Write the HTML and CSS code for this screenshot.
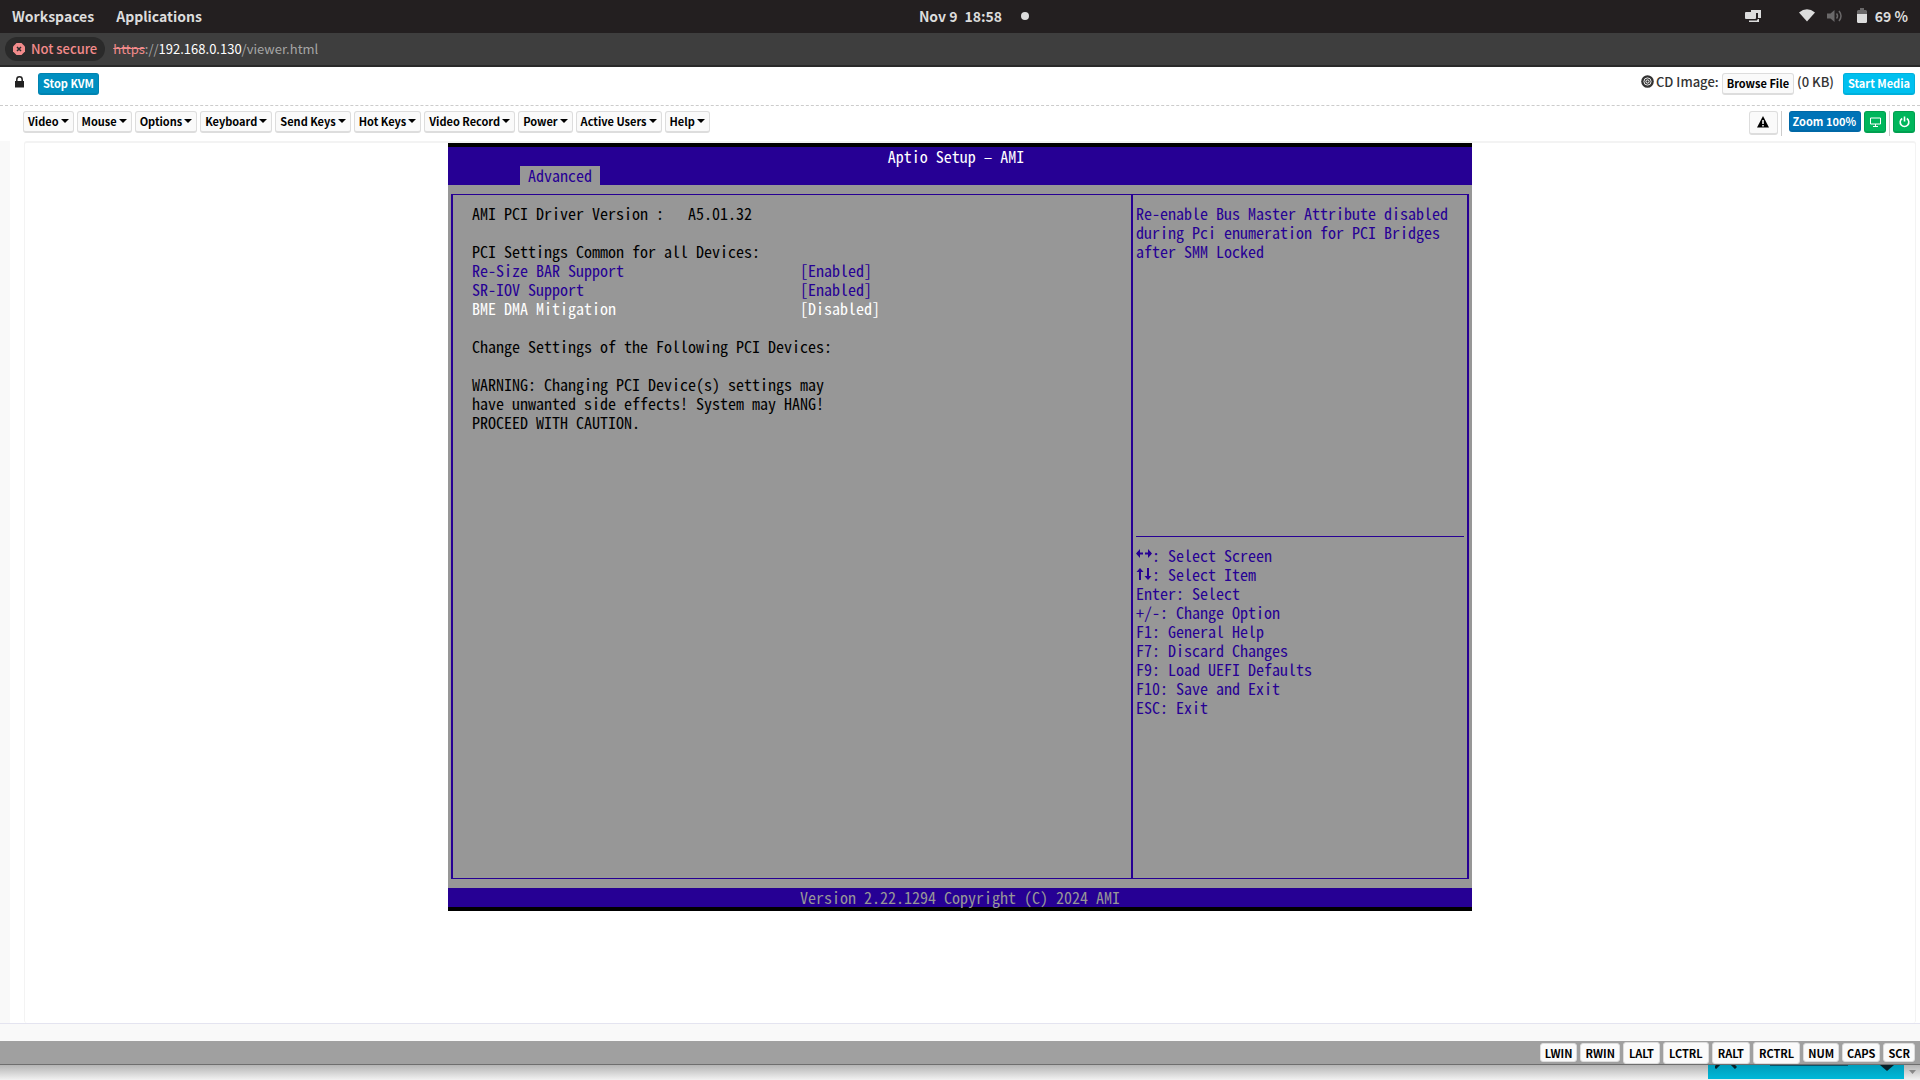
FILE: index.html
```html
<!DOCTYPE html>
<html lang="en">
<head>
<meta charset="utf-8">
<title>KVM Viewer</title>
<link rel="stylesheet" href="styles.css">
</head>
<body>
<header class="desktop-bar">
  <nav class="desktop-menu">
    <button class="desktop-item" type="button">Workspaces</button>
    <button class="desktop-item" type="button">Applications</button>
  </nav>
  <div class="clock"><span>Nov 9</span><span>18:58</span><span class="clock-dot"></span></div>
  <div class="tray">
    <svg class="tray-windows" width="16" height="14" viewBox="0 0 16 14"><path d="M6 1h10v8h-3V4H6zM4 11h8v-1h2v3H4z" fill="#dcdcdc"/><rect x="0" y="3" width="11" height="7" rx="1" fill="#dcdcdc"/><path d="M12 5v6H4" fill="none" stroke="#231f20"/></svg>
    <svg class="tray-wifi" width="16" height="13" viewBox="0 0 16 13"><path d="M0 3.5Q8-2.8 16 3.5L8 12.5z" fill="#dcdcdc"/></svg>
    <svg class="tray-sound" width="16" height="14" viewBox="0 0 16 14"><path d="M0 4.500h3.500L7.500 1v12L3.500 9.500H0z" fill="#6a6869"/><path d="M9.500 4.500q2 2.500 0 5M12 2q4 5 0 10" fill="none" stroke="#6a6869" stroke-width="1.500"/></svg>
    <svg class="tray-battery" width="10" height="15" viewBox="0 0 10 15"><path d="M3 0h4v2h2l1 1v11l-1 1H1l-1-1V3l1-1h2z" fill="#6a6869"/><path d="M0 6h10v8l-1 1H1l-1-1z" fill="#dcdcdc"/></svg>
    <span>69 %</span>
  </div>
</header>

<div class="address-bar">
  <button class="security-chip" type="button">
    <svg width="12" height="12" viewBox="0 0 12 12"><path d="M3.500 0h5L12 3.500v5L8.500 12h-5L0 8.500v-5z" fill="#f28b8b"/><path d="M4 4l4 4M8 4L4 8" stroke="#2a2a2a" stroke-width="1.500"/></svg>
    Not secure
  </button>
  <div class="url"><s>https</s>://<b>192.168.0.130</b>/viewer.html</div>
</div>

<main class="viewer">
  <div class="media-bar">
    <svg class="lock" width="9" height="12" viewBox="0 0 9 12"><path d="M0 5h9v6.500H0z" fill="#222"/><path d="M1.800 6V3.500a2.700 2.700 0 0 1 5.400 0V6" fill="none" stroke="#222" stroke-width="1.500"/></svg>
    <button class="btn btn-primary" type="button">Stop KVM</button>
    <div class="media">
      <svg width="13" height="13" viewBox="0 0 13 13"><circle cx="6.500" cy="6.500" r="6.300" fill="#333"/><circle cx="6.500" cy="6.500" r="3.600" fill="none" stroke="#fff" stroke-width=".9"/><circle cx="6.500" cy="6.500" r="1.600" fill="none" stroke="#fff" stroke-width="1"/></svg>
      <span class="media-label">CD Image:</span>
      <button class="btn" type="button">Browse File</button>
      <span class="media-size">(0 KB)</span>
      <button class="btn btn-info" type="button">Start Media</button>
    </div>
  </div>

  <div class="toolbar">
    <nav class="menus">
      <button class="btn menu" type="button">Video</button>
      <button class="btn menu" type="button">Mouse</button>
      <button class="btn menu" type="button">Options</button>
      <button class="btn menu" type="button">Keyboard</button>
      <button class="btn menu" type="button">Send Keys</button>
      <button class="btn menu" type="button">Hot Keys</button>
      <button class="btn menu" type="button">Video Record</button>
      <button class="btn menu" type="button">Power</button>
      <button class="btn menu" type="button">Active Users</button>
      <button class="btn menu" type="button">Help</button>
    </nav>
    <div class="tools">
      <button class="btn alert-btn" type="button" aria-label="Alerts"><svg width="12" height="12" viewBox="0 0 12 12"><path d="M6 0l6 11.500H0z" fill="#000"/><path d="M6 4v4M6 9v1.500" stroke="#fff" stroke-width="1.500"/></svg></button>
      <span class="divider"></span>
      <button class="btn btn-zoom" type="button">Zoom 100%</button>
      <button class="btn btn-success" type="button" aria-label="Display"><svg width="11" height="10" viewBox="0 0 11 10"><path d="M.5 1h10v6H.5zM5.500 7v2M3 9.500h5" fill="none" stroke="#fff"/></svg></button>
      <span class="divider"></span>
      <button class="btn btn-success" type="button" aria-label="Power"><svg width="11" height="12" viewBox="0 0 11 12"><path d="M3.200 2.500a4.300 4.300 0 1 0 4.600 0M5.500 .5v5" fill="none" stroke="#fff" stroke-width="1.600"/></svg></button>
    </div>
  </div>

  <div class="stage">
    <div class="gutter"></div>
    <div class="panel">
      <section class="screen">
        <div class="bios-head">
          <div class="bios-title">Aptio Setup – AMI</div>
          <div class="bios-tab">Advanced</div>
        </div>
        <div class="bios-body">
          <div class="bios-frame">
            <div class="bios-main">
              <p>AMI PCI Driver Version :   A5.01.32</p>
              <p>PCI Settings Common for all Devices:</p>
              <dl class="settings">
                <dt>Re-Size BAR Support</dt><dd>[Enabled]</dd>
                <dt>SR-IOV Support</dt><dd>[Enabled]</dd>
                <dt class="selected">BME DMA Mitigation</dt><dd class="selected">[Disabled]</dd>
              </dl>
              <p>Change Settings of the Following PCI Devices:</p>
              <p>WARNING: Changing PCI Device(s) settings may
have unwanted side effects! System may HANG!
PROCEED WITH CAUTION.</p>
            </div>
            <aside class="bios-side">
              <p class="bios-help">Re-enable Bus Master Attribute disabled
during Pci enumeration for PCI Bridges
after SMM Locked</p>
              <ul class="bios-keys">
                <li><svg width="16" height="9" viewBox="0 0 16 9"><path d="M1 4.500h6M9 4.500h6" stroke="#260094" stroke-width="2"/><path d="M0 4.500L4 0v9zM16 4.500L12 0v9z" fill="#260094"/></svg>: Select Screen</li>
                <li><svg width="16" height="12" viewBox="0 0 16 12"><path d="M4 2v10M12 0v10" stroke="#260094" stroke-width="2"/><path d="M4 0l3.500 4h-7zM12 12l3.500-4h-7z" fill="#260094"/></svg>: Select Item</li>
                <li>Enter: Select</li>
                <li>+/-: Change Option</li>
                <li>F1: General Help</li>
                <li>F7: Discard Changes</li>
                <li>F9: Load UEFI Defaults</li>
                <li>F10: Save and Exit</li>
                <li>ESC: Exit</li>
              </ul>
            </aside>
          </div>
        </div>
        <div class="bios-foot">Version 2.22.1294 Copyright (C) 2024 AMI</div>
      </section>
    </div>
  </div>
  <div class="strip"></div>
  <footer class="key-bar">
    <button class="key" type="button">LWIN</button>
    <button class="key" type="button">RWIN</button>
    <button class="key key-tall" type="button">LALT</button>
    <button class="key key-tall" type="button">LCTRL</button>
    <button class="key key-tall" type="button">RALT</button>
    <button class="key key-tall" type="button">RCTRL</button>
    <button class="key" type="button">NUM</button>
    <button class="key" type="button">CAPS</button>
    <button class="key" type="button">SCR</button>
  </footer>
</main>

<div class="behind">
  <div class="behind-card">
    <svg width="22" height="4" viewBox="0 0 22 4"><path d="M6-3L0 3M15-3l6 6" stroke="#06212a" stroke-width="3"/></svg>
    <span class="behind-line"></span>
    <svg width="14" height="6" viewBox="0 0 14 6"><path d="M0 0h14L7 6z" fill="#06212a"/></svg>
  </div>
  <svg class="scroll-arrow" width="7" height="4" viewBox="0 0 7 4"><path d="M0 0h7L3.500 4z" fill="#888"/></svg>
</div>
</body>
</html>
```
FILE: styles.css
```css
* { box-sizing: border-box; }

body {
  margin: 0;
  min-height: 100vh;
  display: flex;
  flex-direction: column;
  overflow: hidden;
  background: #fff;
  font: 500 14px/18px "Noto Sans CJK SC", "Open Sans", sans-serif;
  color: #333;
}

button {
  margin: 0;
  font: inherit;
  color: inherit;
  cursor: pointer;
}

svg { display: block; flex: none; overflow: hidden; }

p, dl, dd, ul { margin: 0; padding: 0; list-style: none; }

/* Desktop panel */
.desktop-bar {
  height: 33px;
  display: grid;
  grid-template-columns: 1fr auto 1fr;
  align-items: center;
  padding: 0 12px 2px;
  background: #231f20;
  color: #dcdcdc;
  font-size: 14px;
  font-weight: 700;
}

.desktop-menu { display: flex; gap: 22px; }

.desktop-item { border: 0; padding: 0; background: none; }

.clock { display: flex; align-items: center; gap: 7px; padding-left: 28px; }

.clock-dot {
  width: 8px;
  height: 8px;
  margin-left: 12px;
  border-radius: 50%;
  background: #dcdcdc;
}

.tray { display: flex; align-items: center; justify-content: flex-end; gap: 8px; }

.tray-windows { margin-right: 30px; }
.tray-wifi { margin-right: 4px; }
.tray-sound { margin-right: 6px; }

/* Address bar */
.address-bar {
  height: 34px;
  display: flex;
  align-items: center;
  gap: 8px;
  padding: 0 5px;
  background: #3e3e3e;
  border-bottom: 2px solid #292929;
}

.security-chip {
  height: 24px;
  display: flex;
  align-items: center;
  gap: 6px;
  padding: 0 8px 1px;
  border: 0;
  border-radius: 12px;
  background: #2a2a2a;
  color: #f28b8b;
  font-size: 13px;
}

.url { color: #a5a5a5; font-size: 13px; font-weight: 400; }
.url s { color: #f28b8b; }
.url b { color: #fff; font-weight: 400; }

/* Viewer */
.viewer {
  flex: 1;
  display: flex;
  flex-direction: column;
  background: #fff;
}

.btn {
  height: 22px;
  display: flex;
  align-items: center;
  justify-content: center;
  padding: 0 4px 1px;
  border: 1px solid #ddd;
  border-bottom-width: 2px;
  border-radius: 3px;
  background: #fafafa;
  color: #000;
  font-size: 11px;
  font-weight: 700;
  white-space: nowrap;
}

.btn-primary { background: #008fc0; border-color: #0083b0; color: #fff; }
.btn-info { background: #00c0ef; border-color: #00b0db; color: #fff; }
.btn-success { width: 22px; padding: 0; background: #00b65c; border-color: #00a050; }
.btn-zoom { height: 21px; padding: 0 4px 1px 3px; background: #0073b7; border-color: #0068a6; color: #fff; }

.media-bar {
  height: 39px;
  display: flex;
  align-items: flex-start;
  padding: 6px 5px 0 15px;
  border-bottom: 1px dashed #ccc;
}

.lock { margin: 3px 14px 0 0; }

.media { display: flex; margin-left: auto; }
.media svg { margin: 2px 2px 0 0; }
.media-label { margin-right: 3px; font-size: 13px; }
.media-size { margin: 0 9px 0 3px; font-size: 13px; }

.toolbar {
  height: 35px;
  display: flex;
  justify-content: space-between;
  padding: 5px 5px 0 23px;
}

.menus { display: flex; gap: 3px; }

.menu::after {
  content: "";
  margin-left: 2px;
  border: 4px solid transparent;
  border-top-color: #000;
  border-bottom: 0;
}

.tools { display: flex; gap: 3px; }
.alert-btn { width: 29px; height: 24px; }
.divider { width: 1px; height: 25px; background: #ccc; }
.divider + .btn-zoom { margin-left: 4px; }

/* Remote screen */
.stage { flex: 1; display: flex; border-bottom: 1px solid #e4e4f0; }

.gutter { width: 10px; background: #f9f9f9; }

.panel {
  flex: 1;
  margin: 0 4px 0 14px;
  padding: 0 20px 0 0;
  border: 1px solid #f3f3f3;
  border-top-width: 2px;
  border-bottom: 0;
  border-radius: 3px;
}

.screen {
  max-width: 1024px;
  margin: 0 auto;
  border: solid #000;
  border-width: 4px 0;
  background: #979797;
  font: 300 16px/19px "Noto Sans Mono CJK SC", "Liberation Mono", monospace;
  color: #000;
}

.screen p { white-space: pre; }

.bios-head { background: #260094; }
.bios-title { padding-right: 8px; color: #fff; text-align: center; }

.bios-tab {
  width: 80px;
  margin-left: 72px;
  background: #979797;
  color: #260094;
  text-align: center;
}

.bios-body { padding: 9px 3px; }

.bios-frame {
  display: grid;
  grid-template-columns: 1fr 334px;
  border: solid #260094;
  border-width: 1px 2px;
}

.bios-main {
  min-height: 683px;
  padding: 9px 19px;
  border-right: 2px solid #260094;
}

.bios-main p { margin-bottom: 19px; }
.bios-main p + dl { margin-top: -19px; margin-bottom: 19px; }

.settings {
  display: grid;
  grid-template-columns: 328px 1fr;
  color: #260094;
}

.settings .selected { color: #fff; }

.bios-side { padding: 9px 3px; color: #260094; }

.bios-help { min-height: 332px; }

.bios-keys { padding-top: 9px; border-top: 1px solid #260094; }

.bios-keys li { display: flex; }
.bios-keys svg { margin-top: 3px; }

.bios-foot { background: #260094; color: #979797; text-align: center; }

/* Bottom of the viewer */
.strip { height: 17px; background: #f9f9f9; }

.key-bar {
  height: 24px;
  display: flex;
  align-items: center;
  justify-content: flex-end;
  gap: 3px;
  padding: 0 5px;
  border-bottom: 1px solid #6e6e6e;
  background: #a0a0a0;
}

.key {
  height: 19px;
  padding: 0 4px;
  border: 1px solid #ddd;
  border-radius: 3px;
  background: #fafafa;
  color: #000;
  font-size: 11px;
  font-weight: 700;
  line-height: 16px;
}

.key-tall { height: 22px; padding: 0 5px; }

.behind {
  height: 15px;
  display: flex;
  justify-content: flex-end;
  gap: 5px;
  padding-right: 4px;
  background: linear-gradient(#b4b4b4, #f2f2f2);
}

.behind-card {
  width: 196px;
  height: 14px;
  display: flex;
  justify-content: space-between;
  padding: 0 10px 0 7px;
  background: linear-gradient(#009dbb, #00b8d8);
}

.behind-line { width: 78px; height: 1px; background: #06536b; }

.scroll-arrow { margin-top: 5px; }
```
